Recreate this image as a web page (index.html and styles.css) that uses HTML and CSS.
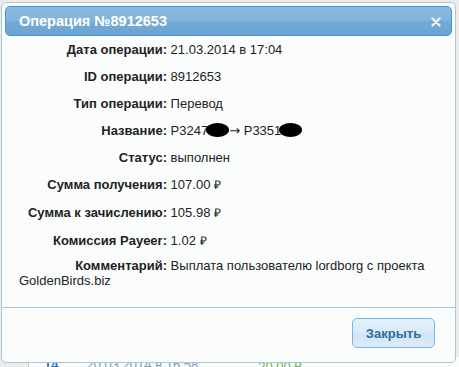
FILE: index.html
```html
<!DOCTYPE html>
<html lang="ru">
<head>
    <meta charset="UTF-8">
    <title>Операция №8912653</title>
    <link rel="stylesheet" href="styles.css">
</head>
<body>
    <div class="dialog">
        <div class="titlebar">
            <span class="title">Операция №8912653</span>
            <svg class="close" width="10" height="10" viewBox="0 0 10 10">
                <path d="M1.5 1.5 L8.5 8.5 M8.5 1.5 L1.5 8.5" stroke="#eef4fa" stroke-width="2.4" stroke-linecap="round"/>
            </svg>
        </div>
        <div class="content">
            <div class="row"><span class="label">Дата операции:</span> 21.03.2014 в 17:04</div>
            <div class="row"><span class="label">ID операции:</span> 8912653</div>
            <div class="row"><span class="label">Тип операции:</span> Перевод</div>
            <div class="row"><span class="label">Название:</span> P3247<span class="blot"></span><span class="arrow">&rarr;</span> P3351<span class="blot"></span></div>
            <div class="row"><span class="label">Статус:</span> выполнен</div>
            <div class="row"><span class="label">Сумма получения:</span> 107.00 <span class="rub">₽</span></div>
            <div class="row"><span class="label">Сумма к зачислению:</span> 105.98 <span class="rub">₽</span></div>
            <div class="row"><span class="label">Комиссия Payeer:</span> 1.02 <span class="rub">₽</span></div>
            <p class="comment"><span class="label">Комментарий:</span> Выплата пользователю lordborg с проекта GoldenBirds.biz</p>
        </div>
        <div class="buttonpane">
            <button class="btn">Закрыть</button>
        </div>
    </div>
    <div class="behind">
        <span class="icon">14</span>
        <span class="date">20.03.2014 в 16:58</span>
        <span class="money">20.00 ₽</span>
    </div>
</body>
</html>
```

FILE: styles.css
```css
body {
    margin: 0;
    height: 367px;
    overflow: hidden;
    background-color: #ececec;
    font-family: Arial, "Liberation Sans", sans-serif;
    font-size: 13px;
    color: #222;
}

/* Окно диалога */
.dialog {
    box-sizing: border-box;
    width: 455px;
    height: 361px;
    margin: 2px 0 0 1px;
    padding: 3px;
    display: flex;
    flex-direction: column;
    background-color: #fbfdfd;
    border: 1px solid #a6c9e2;
    border-radius: 5px;
    position: relative;
    z-index: 1;
}

.titlebar {
    height: 30px;
    box-sizing: border-box;
    display: flex;
    align-items: center;
    justify-content: space-between;
    padding: 0 10px 0 13px;
    background: linear-gradient(#8cbae0, #81b3dc 50%, #74aad6 52%, #6ba3d1);
    border: 1px solid #4297d7;
    border-radius: 5px;
    color: #fff;
    font-size: 14.5px;
    font-weight: bold;
}

.close {
    display: block;
    margin-top: 1px;
}

.content {
    flex: 1;
    padding: 0 0 0 14px;
}

.row {
    line-height: 27px;
    white-space: nowrap;
}

.label {
    display: inline-block;
    width: 148px;
    text-align: right;
    font-weight: bold;
}

.blot {
    display: inline-block;
    width: 23px;
    height: 14px;
    margin: 0 0 0 -2px;
    vertical-align: -2px;
    background-color: #000;
    border-radius: 50%;
}

.arrow {
    font-family: "DejaVu Sans", sans-serif;
    font-size: 13px;
}

.rub {
    font-size: 12px;
}

.comment {
    margin: 3px 0 0 0;
    line-height: 15px;
}

/* Нижняя панель с кнопкой */
.buttonpane {
    display: flex;
    justify-content: flex-end;
    padding: 10px 20px 0 0;
    height: 44px;
    border-top: 1px solid #a6c9e2;
    margin: 0 -3px -3px;
}

.btn {
    width: 83px;
    height: 30px;
    font-family: inherit;
    font-size: 13px;
    font-weight: bold;
    color: #2e6e9e;
    background: linear-gradient(#e4f1fb, #d8eaf8 50%, #cfe4f5 52%, #dcebf8);
    border: 1px solid #79b7e7;
    border-radius: 5px;
}

/* Страница под окном */
.behind {
    display: flex;
    margin: -6px 0 0 28px;
    padding-left: 15px;
    border-left: 1px solid #ccc;
    background-color: #fbfdfd;
    color: #7a9ab8;
    font-size: 13px;
}

.icon {
    color: #3a6fb0;
    font-weight: bold;
}

.date {
    margin-left: 28px;
}

.money {
    margin-left: 60px;
    color: #6ab04c;
}
```
